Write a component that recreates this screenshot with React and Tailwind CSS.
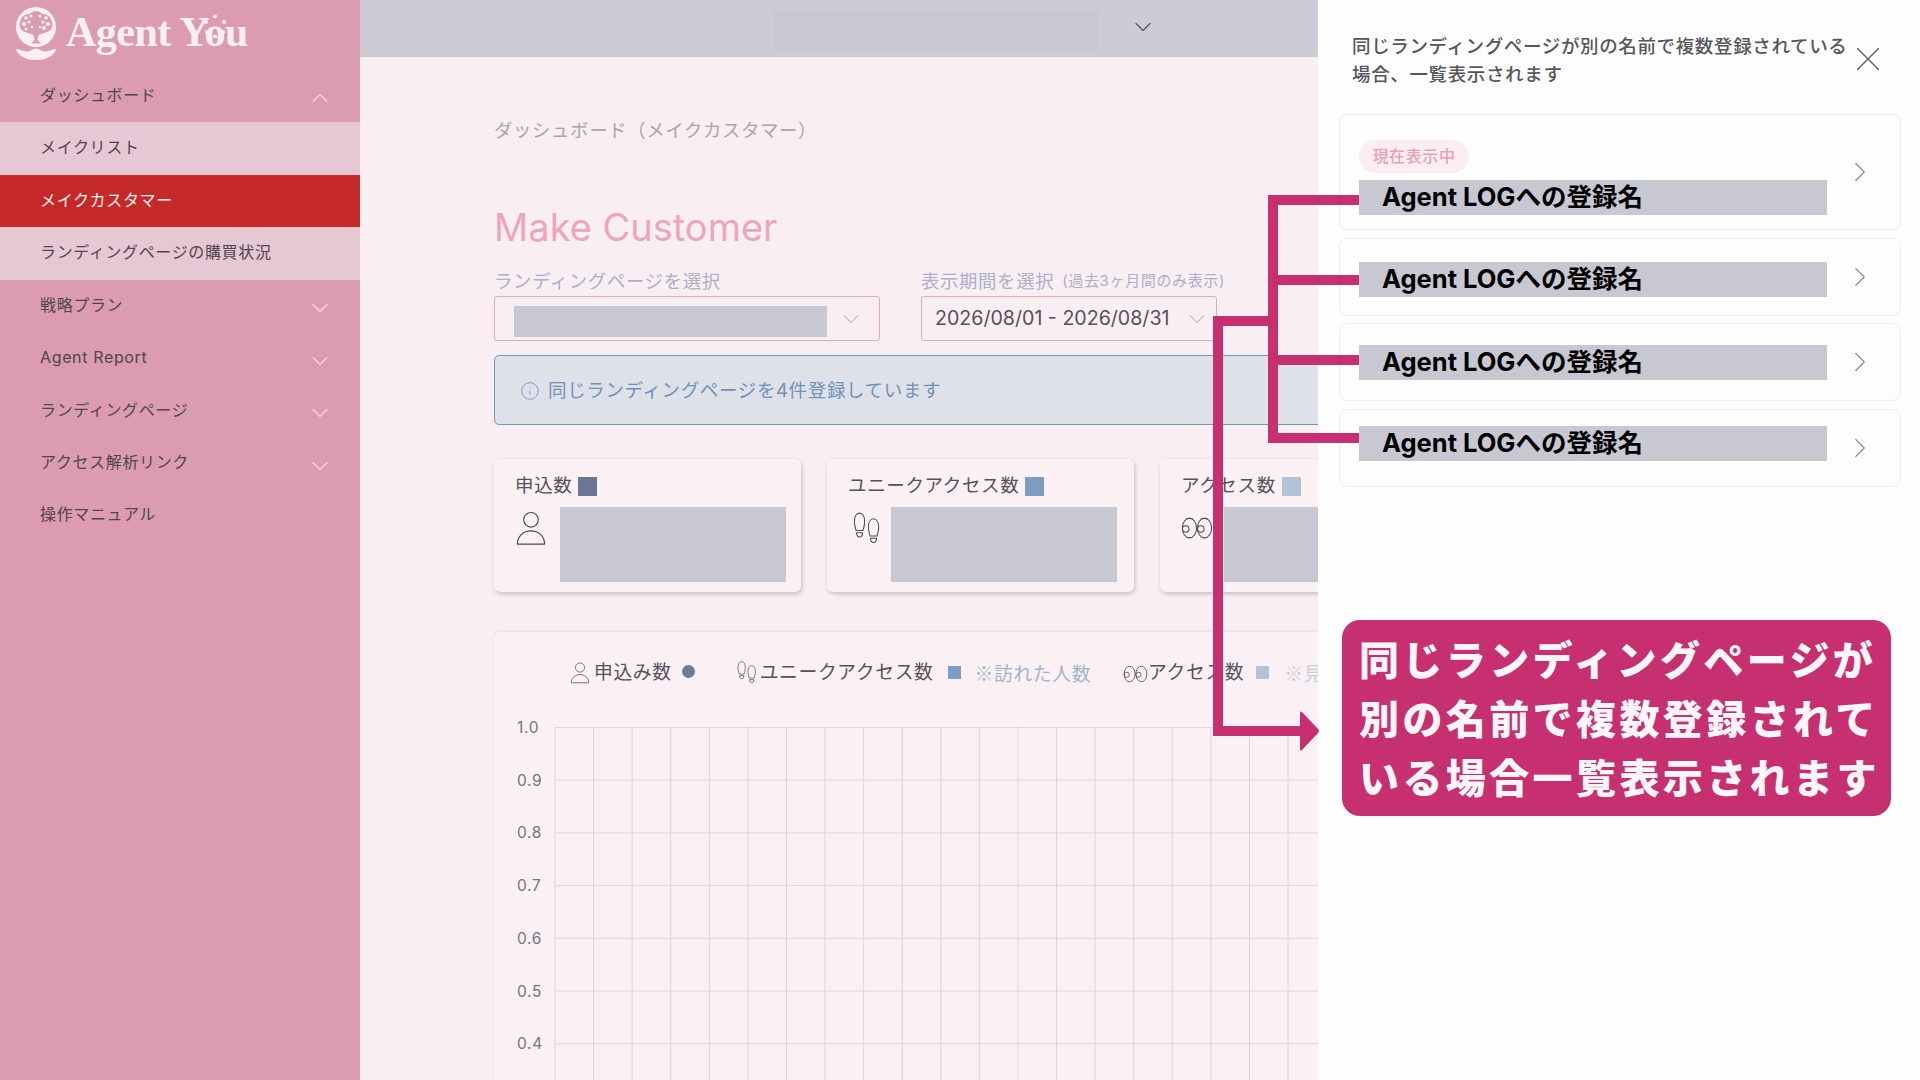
import * as React from "react";
import { ChevronDown, ChevronRight, ChevronUp, Info, X } from "lucide-react";

const navItems = [
  { label: "戦略プラン" },
  { label: "Agent Report" },
  { label: "ランディングページ" },
  { label: "アクセス解析リンク" },
];

const drawerCards = [
  { cls: "h-[114px] pt-[25px]", current: true },
  { cls: "h-[76px] pt-[23px]" },
  { cls: "h-[76px] pt-[21px]" },
  { cls: "h-[76px] pt-[16px]" },
];

function PersonIcon({ className }) {
  return (
    <svg viewBox="0 0 32 36" fill="none" stroke="#4a4a52" strokeWidth="1.2" className={className}>
      <circle cx="16" cy="9" r="7.5" />
      <path d="M2 34c0-8 6-13.5 14-13.5S30 26 30 34z" strokeLinejoin="round" />
    </svg>
  );
}

function StepsIcon({ className }) {
  return (
    <svg viewBox="0 0 30 36" fill="none" stroke="#4a4a52" strokeWidth="1.1" className={className}>
      <path d="M7 1c3.5 0 5.5 4 5.500 9 0 4-1 7-1.800 9.500H3.300C2.500 17 1.500 14 1.500 10 1.500 5 3.500 1 7 1z" />
      <path d="M3.800 22h6.400c0 3-1.200 4.500-3.200 4.500S3.800 25 3.800 22z" />
      <path d="M22 7c3.500 0 5.500 4 5.500 9 0 4-1 7-1.800 9.500h-7.400C17.500 23 16.500 20 16.500 16 16.500 11 18.500 7 22 7z" />
      <path d="M18.800 28h6.400c0 3-1.200 4.500-3.200 4.500S18.800 31 18.800 28z" />
    </svg>
  );
}

function EyesIcon({ className }) {
  return (
    <svg viewBox="0 0 34 24" fill="none" stroke="#4a4a52" strokeWidth="1.100" className={className}>
      <ellipse cx="9" cy="12" rx="7.500" ry="10.500" />
      <ellipse cx="25" cy="12" rx="7.500" ry="10.500" />
      <circle cx="5" cy="13" r="3.500" />
      <circle cx="21" cy="13" r="3.500" />
    </svg>
  );
}

function Logo() {
  return (
    <div className="flex h-[70px] items-center pl-[15px]">
      <svg viewBox="0 0 42 54" className="mb-[3px] h-[54px] w-[42px] shrink-0">
        <circle cx="21" cy="20" r="20" fill="#fbeff3" />
        <path d="M21 4c-3 0-5 1.500-6.500 3C10 7 6 10 5.500 14 3.500 18 5 23 9 24.500c2.500 1.500 6 2 8.500 3 1.500 1 2 3 2 5.500l-3.500 3.500h10L22.500 33c0-2.500.5-4.500 2-5.500 2.500-1 6-1.500 8.500-3 4-1.500 5.500-6.500 3.500-10.500C36 10 32 7 27.500 7 26 5.500 24 4 21 4z" fill="#db9bb0" />
        <g fill="#fbeff3">
          <circle cx="11" cy="11" r="1.800" />
          <circle cx="16" cy="9" r="1.500" />
          <circle cx="9" cy="17" r="2" />
          <circle cx="14" cy="15" r="1.600" />
          <circle cx="11" cy="22" r="1.500" />
          <circle cx="25" cy="9" r="1.500" />
          <circle cx="31" cy="11" r="1.800" />
          <circle cx="28" cy="15" r="1.600" />
          <circle cx="33" cy="17" r="2" />
          <circle cx="29" cy="21" r="2" />
          <circle cx="25" cy="20" r="1.300" />
          <circle cx="17" cy="20" r="1.300" />
        </g>
        <path d="M1 42c5 .5 8 3 12 2.500 3-.5 5-3 8-3s5 2.500 8 3c4 .5 7-2 12-2.500-1 6-9 11-20 11S2 48 1 42z" fill="#fbeff3" />
      </svg>
      <span className="mb-[6px] ml-[9px] whitespace-nowrap font-['Liberation_Serif',serif] text-[42px] leading-none font-bold tracking-[-0.5px] text-[#fbeff3]">
        Agent Y
        <span className="relative">
          o
          <svg viewBox="0 0 24 24" className="absolute top-[5px] left-[-1px] size-[24px]" fill="#fbeff3">
            <circle cx="12" cy="2.500" r="2" />
            <circle cx="3" cy="8" r="2" />
            <circle cx="21" cy="8" r="2" />
            <circle cx="4" cy="18" r="2" />
            <circle cx="20" cy="18" r="2" />
            <circle cx="12" cy="22.500" r="2" />
          </svg>
        </span>
        u
      </span>
    </div>
  );
}

function Sidebar() {
  return (
    <aside className="flex w-[360px] shrink-0 flex-col bg-[#db9bb0] text-[16px] text-[#4e474c]">
      <Logo />
      <div className="flex h-[52px] items-center justify-between pr-[26px] pl-[40px]">
        <span className="mb-[3px]">ダッシュボード</span>
        <ChevronUp className="mt-[4px] size-[28px] text-[#f3d9e2]" strokeWidth={1} />
      </div>
      <div className="flex h-[53px] items-center bg-[#e5c8d3] pb-[3px] pl-[40px]">メイクリスト</div>
      <div className="flex h-[52px] items-center bg-[#c62a28] pb-[3px] pl-[40px] text-[#fdf2f4]">メイクカスタマー</div>
      <div className="flex h-[53px] items-center bg-[#e5c8d3] pb-[3px] pl-[40px]">ランディングページの購買状況</div>
      {navItems.map((item) => (
        <div key={item.label} className="flex h-[52.500px] items-center justify-between pr-[26px] pl-[40px]">
          <span className="mb-[3px]">{item.label}</span>
          <ChevronDown className="mt-[4px] size-[28px] text-[#f3d9e2]" strokeWidth={1} />
        </div>
      ))}
      <div className="flex h-[52.500px] items-center pb-[4px] pl-[40px]">操作マニュアル</div>
    </aside>
  );
}

function StatCard({ title, swatch, icon }) {
  return (
    <div className="h-[133px] w-[307px] shrink-0 rounded-[6px] bg-[#fbf1f5] pt-[14px] pl-[21px] shadow-[1px_2px_4px_rgba(120,90,105,0.35)]">
      <div className="flex h-[26px] items-center gap-[6px] text-[18.500px] text-[#55505a]">
        {title}
        <span className={`size-[19px] ${swatch}`} />
      </div>
      <div className="mt-[8px] flex">
        {icon}
        <div className="h-[75px] w-[226px] shrink-0 bg-[#c7c8d1]" />
      </div>
    </div>
  );
}

function Chart() {
  const rows = [1.0, 0.9, 0.8, 0.7, 0.6, 0.5, 0.4];
  const xs = Array.from({ length: 20 }, (_, i) => 61 + i * 38.580);
  return (
    <svg width="824" height="380" className="mt-[28px] block">
      {rows.map((v, i) => (
        <line key={v} x1="61" x2="824" y1={13.500 + i * 52.700} y2={13.500 + i * 52.700} stroke="#e2d4dc" />
      ))}
      {xs.map((x) => (
        <line key={x} x1={x} x2={x} y1="13" y2="380" stroke="#dfd2da" />
      ))}
      {rows.map((v, i) => (
        <text key={v} x="23" y={19 + i * 52.700} fontSize="15.500" fill="#77737c">
          {v.toFixed(1)}
        </text>
      ))}
    </svg>
  );
}

function Main() {
  return (
    <main className="flex min-w-0 flex-1 flex-col bg-[#f9eff3]">
      <div className="flex h-[57px] shrink-0 items-start bg-[#cdcbd6] pt-[10px] pl-[414px]">
        <div className="h-[41px] w-[324px] bg-[#c7c8d1]" />
        <ChevronDown className="mt-[3px] ml-[31px] size-[28px] text-[#55525c]" strokeWidth={1} />
      </div>
      <div className="pt-[60px] pl-[134px]">
        <div className="h-[26px] text-[18.400px] leading-[26px] text-[#a9a3ac]">ダッシュボード（メイクカスタマー）</div>
        <h1 className="mt-[61px] h-[46px] text-[38px] leading-[46px] font-normal tracking-normal text-[#eda6b9]">Make Customer</h1>
        <div className="mt-[18px] flex">
          <div className="w-[427px]">
            <div className="h-[26px] text-[18.400px] leading-[26px] text-[#a9b0cb]">ランディングページを選択</div>
            <div className="mt-[2px] flex h-[45px] w-[386px] items-center rounded-[3px] border border-[#e8a9bb] pl-[19px]">
              <div className="mt-[5px] h-[31px] w-[313px] bg-[#c7c8d1]" />
              <ChevronDown className="ml-[10px] size-[28px] text-[#b4b4c0]" strokeWidth={0.9} />
            </div>
          </div>
          <div>
            <div className="flex h-[26px] items-center whitespace-nowrap text-[18.400px] leading-[26px] text-[#a9b0cb]">
              表示期間を選択
              <span className="ml-[8px] text-[15px]">(過去3ヶ月間のみ表示)</span>
            </div>
            <div className="mt-[2px] flex h-[45px] w-[296px] items-center justify-between rounded-[3px] border border-[#e8a9bb] pr-[5px] pl-[13px] text-[19.600px] tracking-normal text-[#55505a]">
              2026/08/01 - 2026/08/31
              <ChevronDown className="size-[28px] text-[#b4b4c0]" strokeWidth={0.9} />
            </div>
          </div>
        </div>
        <div className="mt-[14px] flex h-[70px] items-center rounded-[5px] border border-[#7397b8] bg-[#dfe1e9] pt-[1px] pl-[25px] text-[18.500px] text-[#6d92bb]">
          <Info className="mr-[8px] size-[20px] text-[#7f9fd0]" strokeWidth={1.200} />
          同じランディングページを4件登録しています
        </div>
        <div className="mt-[34px] flex gap-[26px]">
          <StatCard
            title="申込数"
            swatch="bg-[#6b7596]"
            icon={<PersonIcon className="mt-[4px] mr-[13px] h-[35px] w-[32px] shrink-0" />}
          />
          <StatCard
            title="ユニークアクセス数"
            swatch="bg-[#7f9dc3]"
            icon={<StepsIcon className="mt-[4px] mr-[10px] ml-[5px] h-[36px] w-[28px] shrink-0" />}
          />
          <StatCard
            title="アクセス数"
            swatch="bg-[#b0c4d6]"
            icon={<EyesIcon className="mt-[9px] mr-[11px] h-[24px] w-[32px] shrink-0" />}
          />
        </div>
        <section className="mt-[40px] rounded-t-[6px] bg-[#fbf1f5] shadow-[0_-1px_3px_rgba(120,90,105,0.12)]">
          <div className="flex h-[54px] items-end whitespace-nowrap pl-[76px] text-[18.800px] leading-[26px] text-[#55505a]">
            <PersonIcon className="mr-[4px] mb-[2px] h-[22px] w-[20px]" />
            <span>申込み数</span>
            <span className="mb-[8px] ml-[10px] size-[13px] rounded-full bg-[#6b7ca3]" />
            <StepsIcon className="mb-[1px] ml-[42px] mr-[3px] h-[24px] w-[20px]" />
            <span>ユニークアクセス数</span>
            <span className="mb-[7px] ml-[14px] size-[13px] bg-[#7f9dc3]" />
            <span className="ml-[14px] font-['Noto_Sans_CJK_JP',sans-serif] text-[#9fb4cf]">※訪れた人数</span>
            <EyesIcon className="mb-[3px] ml-[32px] h-[18px] w-[25px]" />
            <span>アクセス数</span>
            <span className="mb-[7px] ml-[12px] size-[13px] bg-[#b0c4d6]" />
            <span className="ml-[15px] font-['Noto_Sans_CJK_JP',sans-serif] text-[#c3cfdd]">※見</span>
          </div>
          <Chart />
        </section>
      </div>
    </main>
  );
}

function Drawer() {
  return (
    <div className="absolute inset-y-0 right-0 w-[602px] bg-[#fdfdfe] pt-[32px] pl-[21px]">
      <div className="flex">
        <p className="w-[510px] pl-[13px] text-[18.500px] leading-[28px] font-medium text-[#57555b]">
          同じランディングページが別の名前で複数登録されている場合、一覧表示されます
        </p>
        <X className="mt-[6px] ml-[-2px] size-[42px] shrink-0 text-[#5f5d63]" strokeWidth={0.8} />
      </div>
      <div className="mt-[26px] flex w-[562px] flex-col gap-[7.500px]">
        {drawerCards.map((card, i) => (
          <div key={i} className="relative rounded-[8px] border border-[#f0eef0] bg-[#fdfdfd]">
            <div className={`pl-[19px] ${card.cls}`}>
              {card.current && (
                <div className="mb-[7px] flex h-[33px] w-[110px] items-center justify-center rounded-full bg-[#faeef2] pb-[1px] text-[16px] font-medium text-[#e8a0b5]">
                  現在表示中
                </div>
              )}
              <div className="flex h-[35px] w-[468px] items-center bg-[#c7c8d1] pl-[23px] text-[25.500px] font-bold tracking-normal text-black">
                Agent LOGへの登録名
              </div>
            </div>
            <ChevronRight className="absolute top-1/2 right-[23px] size-[34px] -translate-y-1/2 text-[#8b8990]" strokeWidth={0.8} />
          </div>
        ))}
      </div>
    </div>
  );
}

function Annotations() {
  return (
    <>
      <div className="absolute top-[195px] left-[1268px] h-[248px] w-[10px] bg-[#c62f70]" />
      <div className="absolute top-[195px] left-[1268px] h-[10px] w-[91px] bg-[#c62f70]" />
      <div className="absolute top-[275px] left-[1268px] h-[10px] w-[91px] bg-[#c62f70]" />
      <div className="absolute top-[355px] left-[1268px] h-[10px] w-[91px] bg-[#c62f70]" />
      <div className="absolute top-[433px] left-[1268px] h-[10px] w-[91px] bg-[#c62f70]" />
      <div className="absolute top-[316px] left-[1213px] h-[10px] w-[55px] bg-[#c62f70]" />
      <div className="absolute top-[316px] left-[1213px] h-[420px] w-[10px] bg-[#c62f70]" />
      <div className="absolute top-[726px] left-[1213px] h-[10px] w-[90px] bg-[#c62f70]" />
      <svg viewBox="0 0 20 42" className="absolute top-[710px] left-[1299px] h-[42px] w-[20px]" fill="#c62f70">
        <path d="M3 2 19 19q2 2 0 4L3 40q-2 1.500-2-1.500V3.500Q1 .5 3 2z" />
      </svg>
      <div className="absolute top-[620px] left-[1342px] flex h-[196px] w-[549px] flex-col justify-center rounded-[18px] bg-[#c62f70] pt-[2px] pl-[17px] text-[40px] leading-[59px] font-black tracking-[3.400px] whitespace-nowrap text-[#fdf6f9]">
        <div>同じランディングページが</div>
        <div>別の名前で複数登録されて</div>
        <div>いる場合一覧表示されます</div>
      </div>
    </>
  );
}

export default function App() {
  return (
    <div className="relative flex h-[1080px] w-[1920px] overflow-hidden font-['Inter','Noto_Sans_CJK_JP',sans-serif] tracking-[0.04em]">
      <Sidebar />
      <Main />
      <Drawer />
      <Annotations />
    </div>
  );
}
